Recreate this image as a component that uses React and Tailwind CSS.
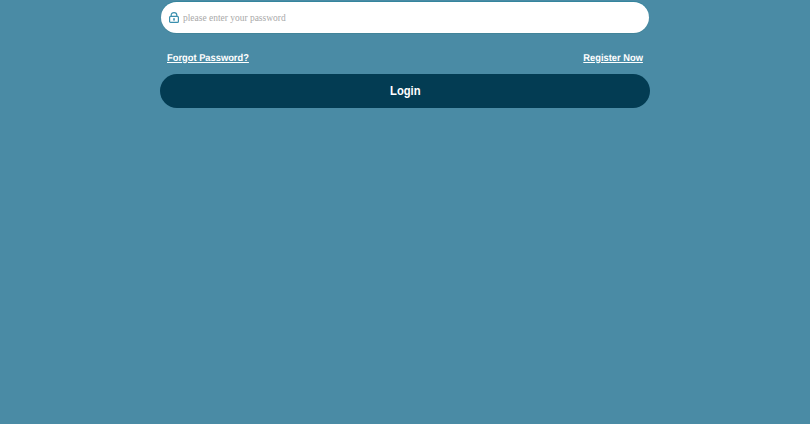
const LockIcon = () => (
  <svg width="10" height="11" viewBox="0 0 10 11" fill="none" className="shrink-0">
    <path d="M2.2 4.5V3C2.2 1.5 3.4.7 5 .7s2.8.8 2.8 2.3v1.5" stroke="#3a8fae" strokeWidth="1.2" />
    <rect x=".6" y="4.4" width="8.8" height="6" rx="1" stroke="#3a8fae" strokeWidth="1.2" />
    <rect x="4.2" y="6.2" width="1.6" height="2.4" fill="#3a8fae" />
  </svg>
);

const App = () => {
  return (
    <div className="min-h-screen bg-[#4a8ba5] font-['Liberation_Sans',sans-serif] [text-rendering:geometricPrecision]">
      <div className="w-[490px] mx-auto pt-[2px]">
        <div className="mx-px h-[31px] bg-white rounded-[16px] flex items-center pl-[8px] gap-[4px] shadow-[0_-1px_0_#35859d,0_1px_0_#428499]">
          <LockIcon />
          <input
            placeholder="please enter your password"
            className="flex-1 outline-none text-[10px] font-['Liberation_Serif',serif] placeholder:text-[#a9a9a9] origin-left scale-x-[0.945]"
          />
        </div>

        <div className="flex justify-between px-[7px] mt-[19px] h-[12px] items-center">
          <a href="#" className="text-[10px] font-bold text-white underline origin-left scale-x-[0.933]">
            Forgot Password?
          </a>
          <a href="#" className="text-[10px] font-bold text-white underline origin-right scale-x-[0.933]">
            Register Now
          </a>
        </div>

        <button className="mt-[10px] w-full h-[34px] rounded-[17px] bg-[#033c53] text-white text-[12px] font-bold">
          <span className="inline-block scale-x-[0.935]">Login</span>
        </button>
      </div>
    </div>
  );
};

export default App;
